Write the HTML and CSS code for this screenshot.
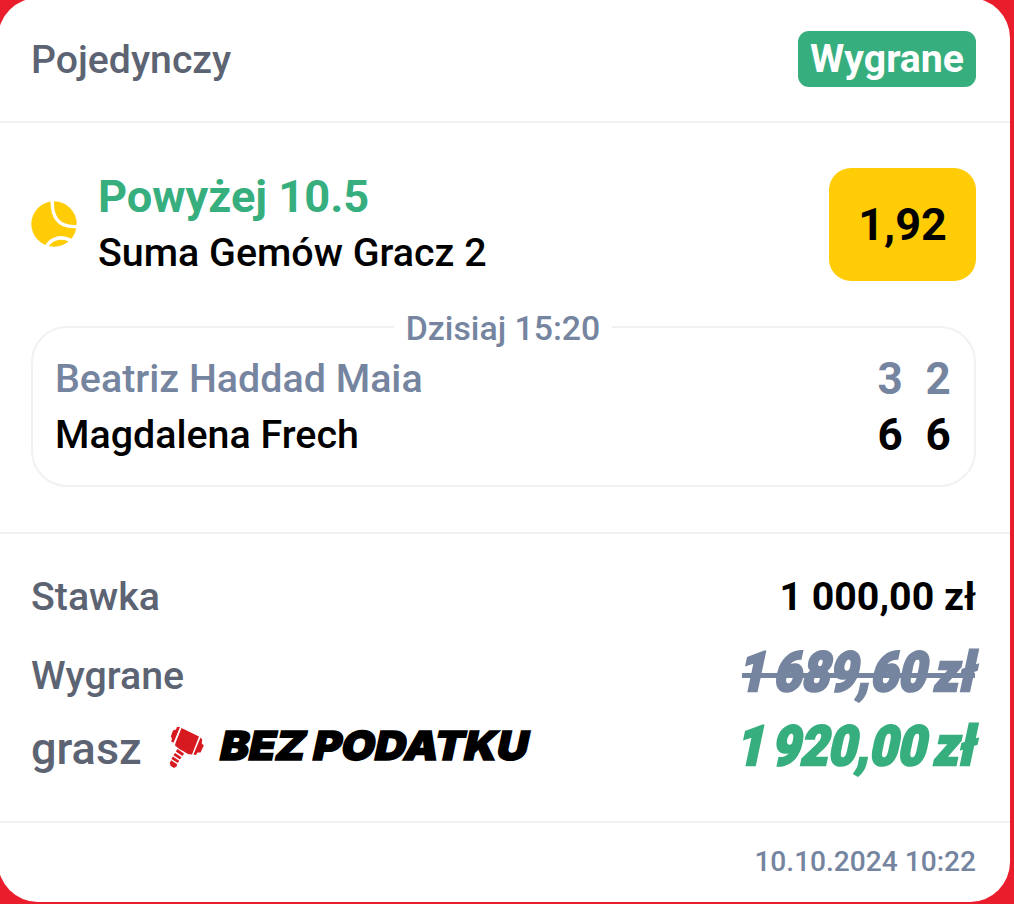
FILE: index.html
```html
<!DOCTYPE html>
<html lang="pl">
<head>
    <meta charset="UTF-8">
    <meta name="viewport" content="width=device-width, initial-scale=1.0">
    <title>Kupon</title>
    <link rel="stylesheet" href="styles.css">
</head>
<body>
    <div class="coupon">
        <div class="coupon-header">
            <span class="coupon-type">Pojedynczy</span>
            <span class="badge">Wygrane</span>
        </div>

        <div class="event">
            <div class="bet">
                <svg class="ball" viewBox="0 0 46 46">
                    <circle cx="23" cy="23" r="22.7" fill="#ffcc05"/>
                    <path d="M21.4 -1 C20.5 14 26 27 46 25.5" fill="none" stroke="#fff" stroke-width="3.4"/>
                    <path d="M15.5 46 C19 38 29 34 40 39.5" fill="none" stroke="#fff" stroke-width="3.6"/>
                </svg>
                <div class="bet-text">
                    <div class="bet-pick">Powyżej 10.5</div>
                    <div class="bet-market">Suma Gemów Gracz 2</div>
                </div>
                <div class="odds">1,92</div>
            </div>

            <fieldset class="match">
                <legend>Dzisiaj 15:20</legend>
                <div class="player lost">
                    <span class="player-name">Beatriz Haddad Maia</span>
                    <span class="set">3</span>
                    <span class="set">2</span>
                </div>
                <div class="player">
                    <span class="player-name">Magdalena Frech</span>
                    <span class="set">6</span>
                    <span class="set">6</span>
                </div>
            </fieldset>
        </div>

        <div class="summary">
            <div class="row stake">
                <span>Stawka</span>
                <span class="stake-value">1 000,00 zł</span>
            </div>
            <div class="row win">
                <span>Wygrane</span>
                <svg class="amount old" viewBox="0 0 270 78">
                    <text transform="translate(7 54) skewX(-12)" textLength="236" lengthAdjust="spacingAndGlyphs">1 689,60 zł</text>
                    <path d="M12 38.5H245" stroke="#75849f" stroke-width="5"/>
                </svg>
            </div>
            <div class="row promo">
                <span class="promo-label">grasz</span>
                <svg class="hammer" viewBox="0 0 50 55">
                    <g fill="#d71920">
                        <path d="M21.5 8L39 16.5L32 34.5L28 34L23 31L20 29.5L15 25.5L15.5 23Z"/>
                        <path d="M20 7L13.5 22.8L11.2 21.5L12 18.5L10.8 16.5L13 10.5L16 9.5L17 7Z"/>
                        <path d="M40.5 17.5L42.2 19.5L41.8 23.5L43.8 25.5L40.5 32.5L37.5 32.5L36 35L33.5 34.5Z"/>
                        <path d="M17.5 29L24 33.5L22.5 36L15.8 31.5Z"/>
                        <path d="M15 33L21.5 37.2L20 39.5L13.5 35.3Z"/>
                        <path d="M12.8 36.5L19.2 40.8L17.8 43L11.5 39Z"/>
                        <path d="M11 40.3L17.2 44.2L16.5 46.5L14 48L10.5 45.8L9.8 43Z"/>
                    </g>
                </svg>
                <svg class="slogan" viewBox="0 0 320 50">
                    <text transform="translate(4 39.5) skewX(-12)" textLength="308" lengthAdjust="spacingAndGlyphs">BEZ PODATKU</text>
                </svg>
                <svg class="amount new" viewBox="0 0 270 78">
                    <text transform="translate(5 54.5) skewX(-12)" textLength="238" lengthAdjust="spacingAndGlyphs">1 920,00 zł</text>
                </svg>
            </div>
        </div>

        <div class="coupon-footer">10.10.2024 10:22</div>
    </div>
</body>
</html>
```

FILE: styles.css
```css
* {
    box-sizing: border-box;
}
body {
    margin: 0;
    height: 904px;
    overflow: hidden;
    background: #ea1d2c;
    font-family: Roboto, "Liberation Sans", sans-serif;
    font-weight: 500;
    color: #000;
}
.coupon {
    width: 1011.5px;
    height: 903.5px;
    margin: -2px 0 0 -2px;
    background: #fff;
    border-radius: 40px;
}
.coupon-header {
    display: flex;
    justify-content: space-between;
    align-items: center;
    height: 125px;
    padding: 0 33.5px 0 33px;
    border-bottom: 2px solid #f0f0f1;
}
.coupon-type {
    font-size: 39.2px;
    color: #5c6372;
}
.badge {
    display: flex;
    align-items: center;
    justify-content: center;
    width: 178px;
    height: 56px;
    margin-top: -2px;
    border-radius: 11px;
    background: #37ae7e;
    color: #fff;
    font-size: 39.2px;
    font-weight: 700;
    line-height: 58px;
}
.event {
    height: 411px;
    padding: 45px 33.5px 0 33px;
    border-bottom: 2px solid #f0f0f1;
}
.bet {
    display: flex;
    align-items: center;
    height: 113px;
}
.ball {
    width: 46px;
    height: 46px;
    margin: -1px 21px 0 0;
}
.bet-text {
    flex: 1;
    line-height: 56px;
}
.bet-pick {
    font-size: 45.2px;
    font-weight: 700;
    color: #37ae7e;
}
.bet-market {
    font-size: 39.4px;
}
.odds {
    width: 147px;
    height: 113px;
    border-radius: 22px;
    background: #ffcc05;
    font-size: 45px;
    font-weight: 700;
    line-height: 113px;
    text-align: center;
}
.match {
    height: 180px;
    margin: 26px 0 0;
    padding: 3px 23px 0 22px;
    border: 2px solid #f0f1f2;
    border-radius: 36px;
}
.match legend {
    height: 40px;
    margin: 0 auto;
    padding: 0 12px;
    font-size: 33.8px;
    line-height: 43px;
    color: #75849f;
}
.player {
    display: flex;
    height: 56px;
    font-size: 39.4px;
    line-height: 57px;
}
.player-name {
    flex: 1;
}
.set {
    width: 26px;
    margin-left: 22px;
    font-size: 44px;
    font-weight: 700;
    line-height: 59px;
    text-align: center;
}
.lost {
    color: #75849f;
}
.summary {
    height: 289px;
    padding: 23px 33.5px 0 33px;
    border-bottom: 2px solid #f0f0f1;
    color: #5c6372;
    font-size: 39.3px;
}
.row {
    display: flex;
    align-items: center;
    justify-content: space-between;
    height: 79px;
}
.stake-value {
    color: #000;
    font-weight: 700;
}
.promo {
    height: 67px;
    justify-content: flex-start;
}
.promo-label {
    width: 129px;
    font-size: 45px;
}
.hammer {
    width: 50px;
    height: 55px;
    margin-top: -2px;
}
.slogan {
    width: 320px;
    height: 50px;
    margin: -8px 0 0 4px;
    font-family: Inter, sans-serif;
    font-size: 40px;
    font-weight: 900;
    stroke: #000;
    stroke-width: 1.5;
    word-spacing: -1px;
}
/* slanted prices are a bit wider than the column */
.amount {
    width: 270px;
    height: 78px;
    margin-right: -24px;
    overflow: visible;
    font-family: Roboto, sans-serif;
    font-size: 55px;
    font-weight: 900;
    stroke-width: 2.6;
    word-spacing: -5px;
}
.old {
    fill: #75849f;
    stroke: #75849f;
}
.new {
    margin-left: auto;
    fill: #37ae7e;
    stroke: #37ae7e;
}
.coupon-footer {
    padding: 0 33.5px;
    font-size: 28.1px;
    line-height: 78px;
    text-align: right;
    color: #75849f;
}
```
